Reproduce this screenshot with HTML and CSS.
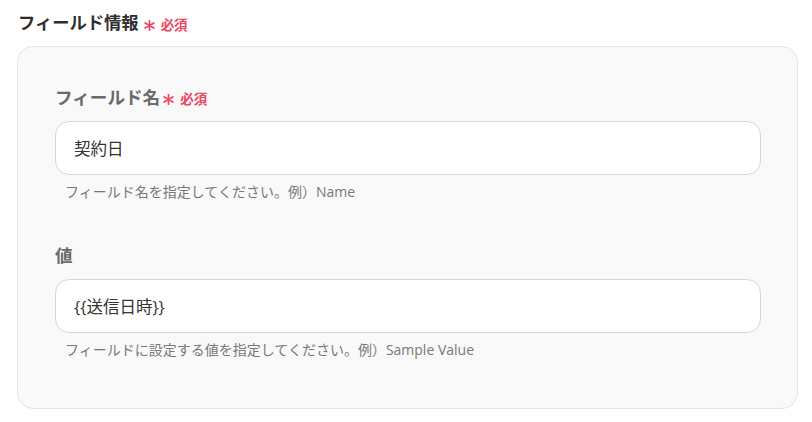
FILE: index.html
```html
<!DOCTYPE html>
<html lang="ja">
<head>
<meta charset="utf-8">
<link rel="stylesheet" href="styles.css">
</head>
<body>
  <div class="section-title">
    <span class="title-text">フィールド情報</span>
    <span class="req">
      <svg class="star" viewBox="0 0 12 12" width="11" height="11"><path d="M6 0.5V11.5M1.2 3.2L10.8 8.8M10.8 3.2L1.2 8.8" stroke="#ef4462" stroke-width="1.8" stroke-linecap="round"/></svg>
      <span class="req-text">必須</span>
    </span>
  </div>
  <div class="card">
    <div class="field">
      <div class="label">
        <span>フィールド名</span>
        <span class="req">
          <svg class="star" viewBox="0 0 12 12" width="11" height="11"><path d="M6 0.5V11.5M1.2 3.2L10.8 8.8M10.8 3.2L1.2 8.8" stroke="#ef4462" stroke-width="1.8" stroke-linecap="round"/></svg>
          <span class="req-text">必須</span>
        </span>
      </div>
      <div class="input">契約日</div>
      <div class="help">フィールド名を指定してください。例）Name</div>
    </div>
    <div class="field">
      <div class="label"><span>値</span></div>
      <div class="input">{{送信日時}}</div>
      <div class="help">フィールドに設定する値を指定してください。例）Sample Value</div>
    </div>
  </div>
</body>
</html>
```
FILE: styles.css
```css
* { box-sizing: border-box; }
html, body { background: #ffffff; }
body {
  margin: 0;
  padding: 11px 14px 0 17px;
  font-family: "Open Sans", "Noto Sans CJK JP", sans-serif;
  color: #333333;
}
.section-title {
  display: flex;
  align-items: center;
  height: 24px;
  padding-left: 1px;
}
.title-text {
  font-size: 17.3px;
  font-weight: 700;
  line-height: 24px;
  color: #2f2f2f;
}
.req {
  display: inline-flex;
  align-items: center;
  margin-left: 5px;
  padding-top: 4px;
}
.star { display: block; margin-top: 1px; }
.req-text {
  margin-left: 6px;
  font-size: 13.5px;
  font-weight: 700;
  line-height: 16px;
  color: #ef4462;
}
.card {
  margin-top: 11px;
  border: 1px solid #e4e4e4;
  border-radius: 16px;
  background: #f9f9f9;
  padding: 38px 36px 49px 37px;
}
.field + .field { margin-top: 42px; }
.label {
  display: flex;
  align-items: center;
  height: 24px;
  font-size: 17.6px;
  font-weight: 700;
  line-height: 24px;
  color: #6a6a6a;
}
.label .req { margin-left: 3px; }
.input {
  margin-top: 12px;
  height: 54px;
  border: 1px solid #d3d6dc;
  border-radius: 14px;
  background: #ffffff;
  padding: 0 18px;
  display: flex;
  align-items: center;
  font-size: 16.5px;
  color: #333333;
}
.help {
  margin-top: 8px;
  padding-left: 10px;
  font-size: 14px;
  line-height: 18px;
  color: #787878;
}
```
